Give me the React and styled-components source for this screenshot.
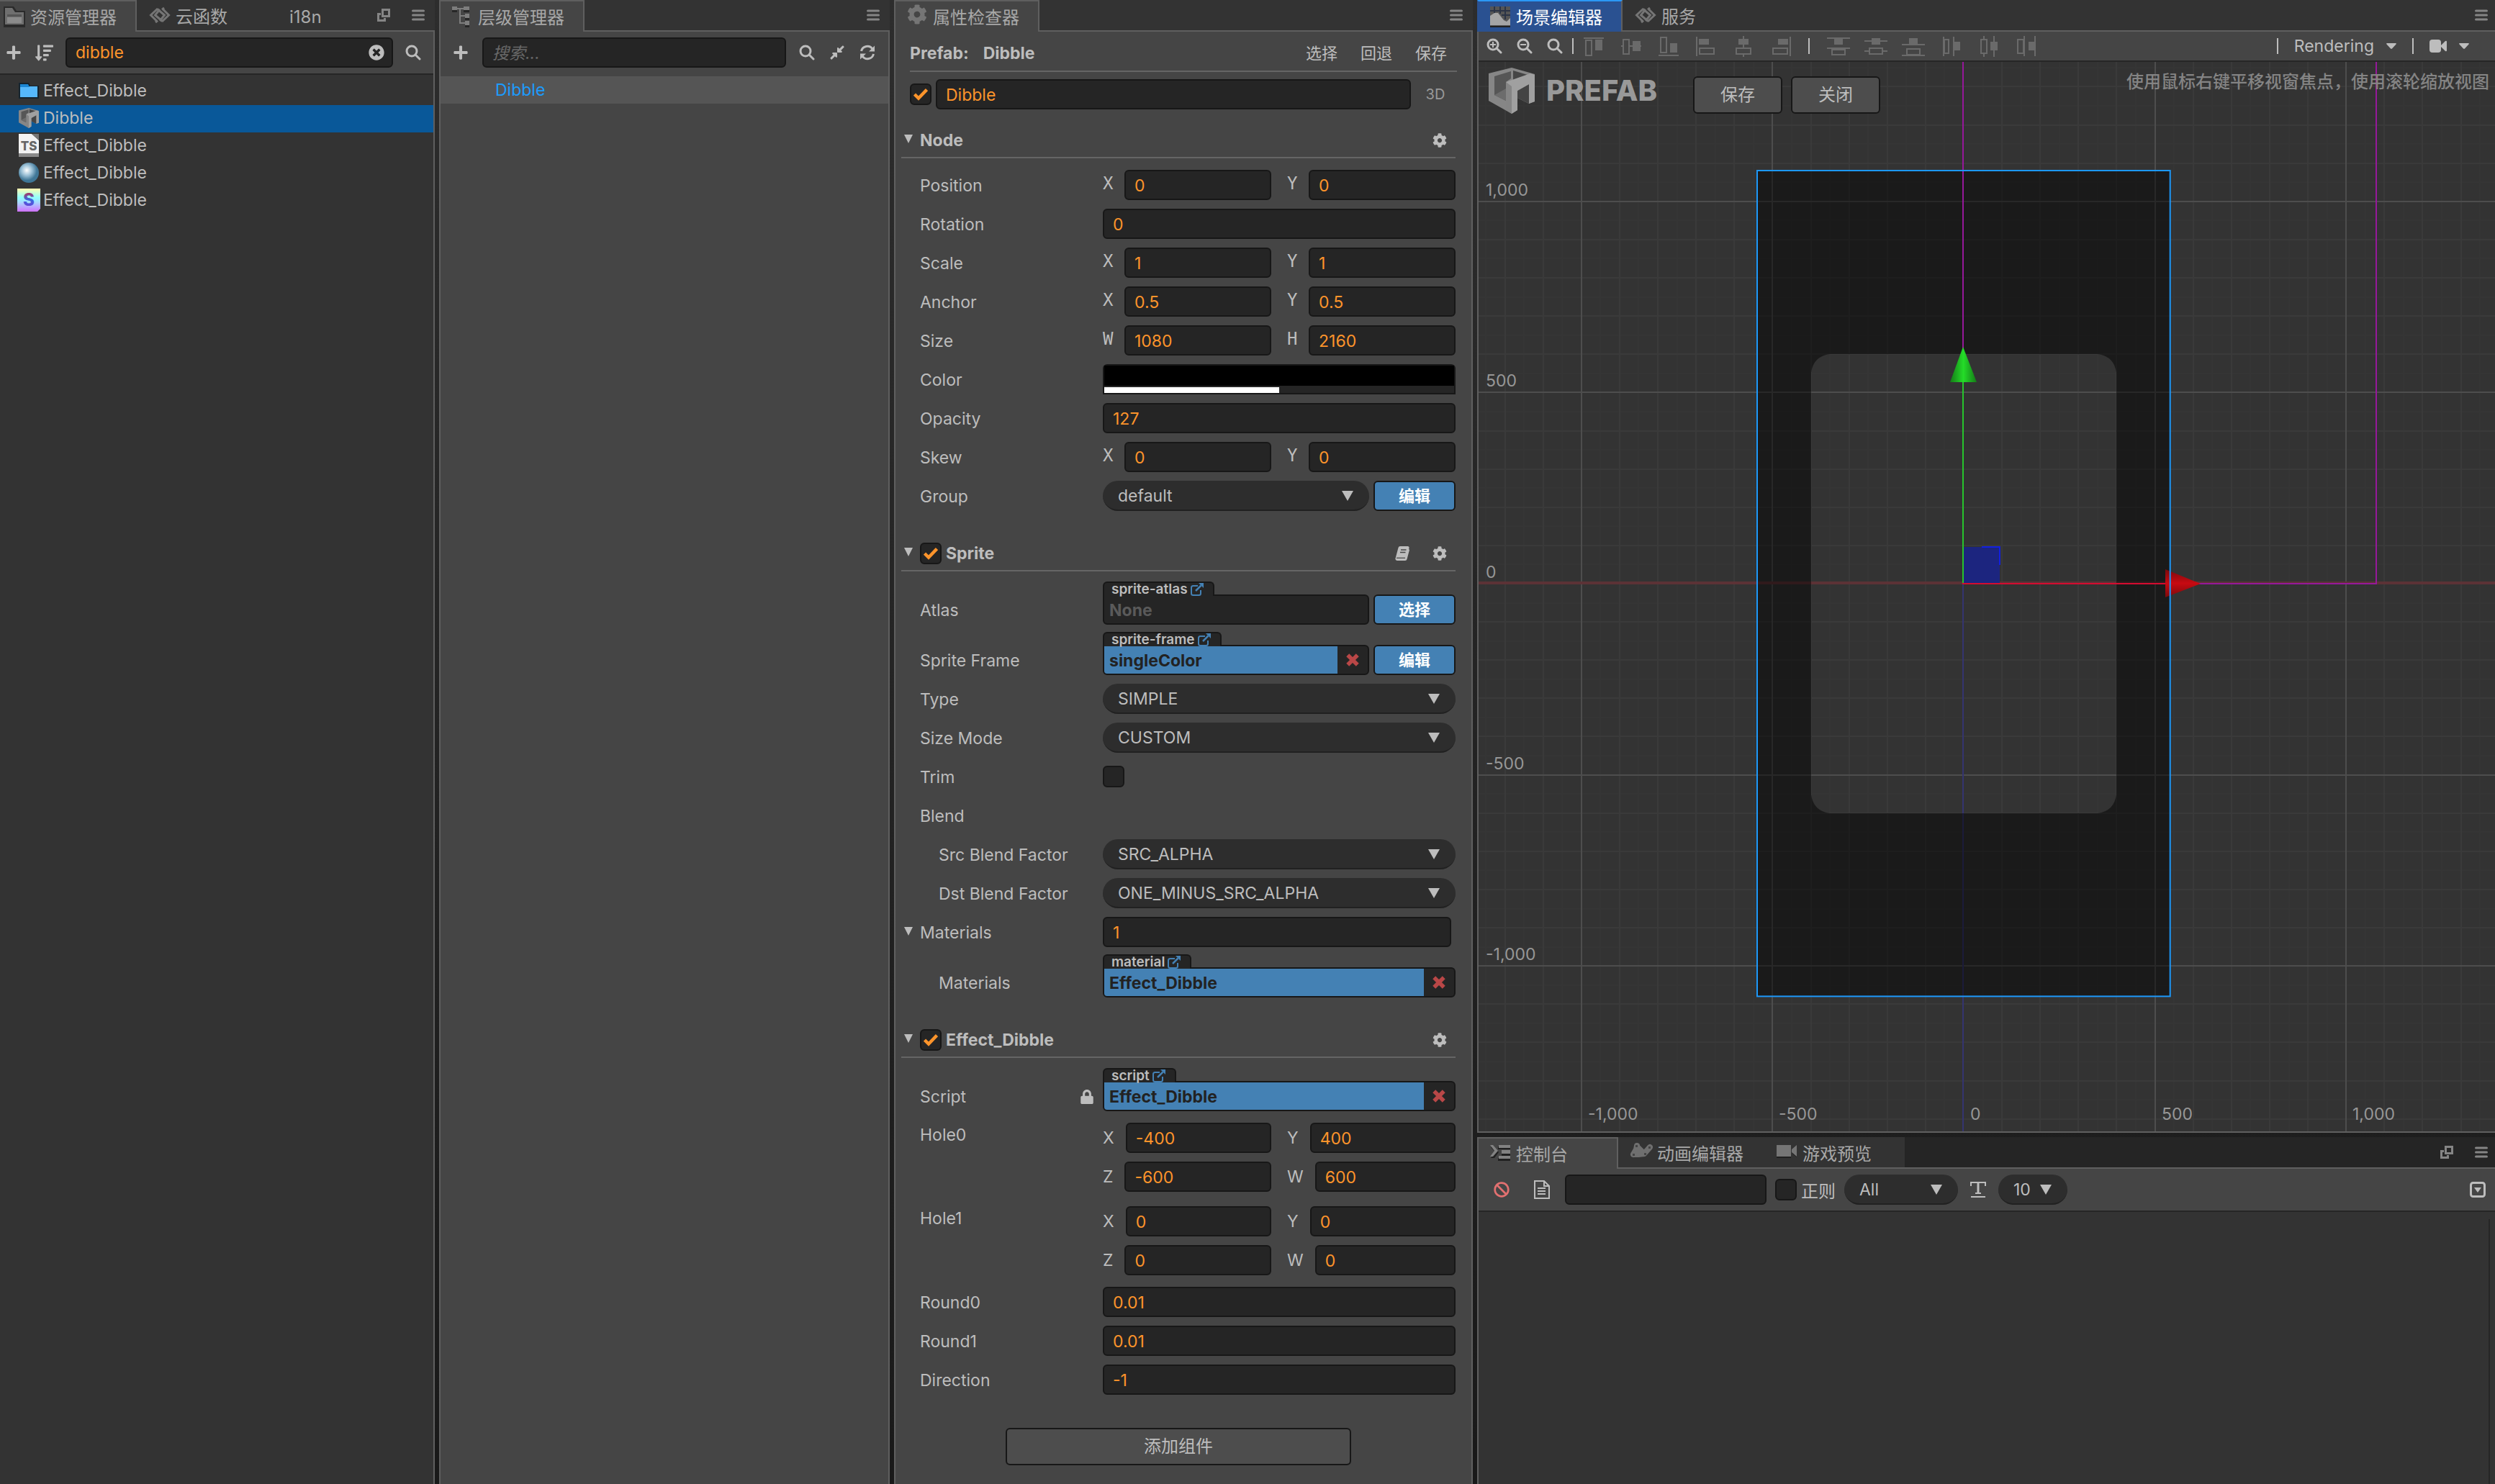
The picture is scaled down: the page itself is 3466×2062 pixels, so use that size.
import React from "react";
import styled, { createGlobalStyle, css } from "styled-components";
import { FaPlus, FaTimesCircle, FaCog, FaLock, FaBan, FaSortAmountDown, FaCompressAlt } from "react-icons/fa";

const GlobalStyle = createGlobalStyle`
  * { box-sizing: border-box; }
  body { margin: 0; background: #222; }
  body, input, button, select {
    font-family: Inter, "Noto Sans CJK SC", sans-serif;
    font-size: 23px;
    color: #bdbdbd;
  }
  button { margin: 0; padding: 0; border: 0; background: none; cursor: pointer; }
`;

/* ---------- shell ---------- */

const Editor = styled.div`
  display: grid;
  grid-template-columns: 604fr 626fr 804fr 1414fr;
  gap: 6px;
  height: 100vh;
  background: linear-gradient(#2d2d2d, #191919);
`;
const Stack = styled.div`
  display: grid;
  grid-template-rows: 1574fr 482fr;
  gap: 6px;
  min-width: 0;
`;
const Panel = styled.section`
  display: flex;
  flex-direction: column;
  min-width: 0;
  min-height: 0;
`;
const Body = styled.div`
  flex: 1;
  min-height: 0;
  display: flex;
  flex-direction: column;
  background: #454545;
  border: 2px solid #5f5f5f;
  border-top: 0;
  border-bottom-width: ${(p) => (p.$closed ? "2px" : "0")};
  ${(p) => p.$flushLeft && "border-left: 0;"}
  ${(p) => p.$flushRight && "border-right: 0;"}
`;
const TabBar = styled.div`
  flex: none;
  display: flex;
  height: 44px;
  background: #333;
`;
const Tab = styled.button`
  flex: 0 1 auto;
  min-width: ${(p) => (p.$flush || p.$plain ? "0" : "196px")};
  display: flex;
  align-items: center;
  gap: 6px;
  padding: 6px 28px 0 ${(p) => (p.$flush ? "4px" : "16px")};
  font-size: 24px;
  line-height: 34px;
  white-space: nowrap;
  color: #a8a8a8;
  background: #333;
  border-bottom: 2px solid #5f5f5f;
  ${(p) => p.$active && css`
    background: #454545;
    padding-top: 4px;
    padding-right: 26px;
    padding-left: ${p.$flush ? "4px" : "14px"};
    border: 2px solid #5f5f5f;
    border-left-width: ${p.$flush ? "0" : "2px"};
    border-bottom: 0;
  `}
  ${(p) => p.$focused && css`
    background: #2a5191;
    border-top-color: #2b98f5;
    border-left-color: #2a5191;
    color: #fff;
  `}
`;
const TabIcon = styled.svg`
  flex: none;
  width: 32px;
  height: 32px;
  margin-top: -6px;
  display: block;
`;
const TabTools = styled.div`
  flex: 1;
  display: flex;
  justify-content: flex-end;
  align-items: center;
  gap: 30px;
  padding-right: ${(p) => p.$right || 12}px;
  background: ${(p) => (p.$dark ? "#252525" : "#333")};
  border-bottom: 2px solid #5f5f5f;
`;
const Glyph = styled.svg`
  display: block;
  flex: none;
  width: ${(p) => p.$w || 20}px;
  height: ${(p) => p.$h || p.$w || 20}px;
`;
const IconButton = styled.button`
  flex: none;
  display: flex;
  align-items: center;
  justify-content: center;
  width: ${(p) => p.$w || 24}px;
  height: 42px;
  color: #bdbdbd;
`;
const Toolbar = styled.div`
  flex: none;
  display: flex;
  align-items: center;
  height: 58px;
  padding: ${(p) => p.$pad};
  gap: ${(p) => p.$gap || 16}px;
  border-bottom: ${(p) => (p.$line ? "2px solid #262626" : "0")};
  box-sizing: content-box;
`;

/* ---------- controls ---------- */

const fieldBox = css`
  height: 42px;
  background: #252525;
  border: 2px solid #171717;
  border-radius: 6px;
`;
const Field = styled.input`
  ${fieldBox}
  flex: ${(p) => p.$fixed ? `0 0 ${p.$fixed}px` : "1"};
  width: 100%;
  min-width: 0;
  padding: 2px 12px 0;
  color: #fd942b;
  outline: none;
  &::placeholder { color: #686868; font-style: italic; opacity: 1; }
`;
const SearchWrap = styled.label`
  ${fieldBox}
  flex: 1;
  min-width: 0;
  display: flex;
  align-items: center;
  padding-right: 10px;
  input { flex: 1; min-width: 0; border: 0; background: none; padding: 0 12px; color: #fd942b; outline: none; }
`;
const CheckWrap = styled.label`
  position: relative;
  flex: none;
  display: block;
  width: 30px;
  height: 30px;
  input {
    appearance: none;
    display: block;
    width: 30px;
    height: 30px;
    margin: 0;
    background: #252525;
    border: 2px solid #171717;
    border-radius: 6px;
  }
  svg { position: absolute; inset: 5px; display: none; color: #fd942b; }
  input:checked + svg { display: block; }
`;
const SelectWrap = styled.div`
  position: relative;
  flex: ${(p) => (p.$fixed ? `0 0 ${p.$fixed}px` : "1")};
  min-width: 0;
  select {
    appearance: none;
    display: block;
    width: 100%;
    height: 42px;
    padding: 2px 40px 0 21px;
    background: #2d2d2d;
    border: 0;
    border-bottom: 2px solid #212121;
    border-radius: 21px;
    outline: none;
  }
  svg { position: absolute; right: 22px; top: 14px; pointer-events: none; }
`;
const BlueButton = styled.button`
  flex: 0 0 114px;
  height: 42px;
  background: #4481b4;
  border: 2px solid #171717;
  border-radius: 6px;
  color: #fff;
  font-size: 22px;
  font-weight: 700;
  line-height: 34px;
`;
const GreyButton = styled.button`
  height: 52px;
  width: ${(p) => p.$w}px;
  background: #4d4d4d;
  border: 2px solid #171717;
  border-radius: 6px;
  font-size: 24px;
  line-height: 44px;
`;

/* ---------- assets & hierarchy ---------- */

const FileList = styled.ul`
  flex: 1;
  margin: 0;
  padding: 4px 0 0;
  list-style: none;
  background: ${(p) => (p.$dark ? "#333" : "#454545")};
  li { padding-bottom: ${(p) => (p.$dark ? 2 : 0)}px; }
`;
const FileRow = styled.li`
  display: flex;
  align-items: center;
  gap: ${(p) => p.$gap || 6}px;
  height: 38px;
  padding-left: ${(p) => p.$indent}px;
  color: ${(p) => p.$color || "#bdbdbd"};
  background: ${(p) => p.$bg || "transparent"};
`;

/* ---------- inspector ---------- */

const Inspector = styled.div`
  flex: 1;
  padding: 0 22px 0 8px;
`;
const PrefabRow = styled.div`
  display: flex;
  align-items: center;
  height: 56px;
  margin: 0 -2px 10px 12px;
  padding: 6px 14px 0 0;
  border-bottom: 2px solid #656565;
  font-size: 23px;
  b { margin-right: 20px; font-weight: 700; }
  b + b { flex: 1; }
  button { margin-left: 32px; font-size: 22px; line-height: 30px; }
`;
const NameRow = styled.div`
  display: flex;
  align-items: center;
  gap: 6px;
  padding-left: 12px;
`;
const Dim = styled.button`
  width: 56px;
  font-size: 20px;
  color: #999;
`;
const Group = styled.section`
  margin-top: 20px;
`;
const GroupHead = styled.header`
  display: flex;
  align-items: center;
  height: 48px;
  padding: 0 12px 0 4px;
  border-bottom: 2px solid #656565;
  h2 { flex: 1; margin: 0 0 0 ${(p) => (p.$check ? 6 : 0)}px; font-size: 23px; font-weight: 700; }
  button { margin-left: 32px; width: 20px; }
`;
const Fold = styled.span`
  flex: none;
  width: 22px;
  padding-bottom: 4px;
`;
const Rows = styled.div`
  padding: 10px 0;
`;
const Row = styled.div`
  display: flex;
  min-height: 54px;
  padding: ${(p) => (p.$asset ? "4px 0 6px" : p.$tall ? "4px 0" : "6px 0")} ;
  padding-right: ${(p) => p.$inset || 0}px;
`;
const Name = styled.span`
  flex: 0 0 ${(p) => (p.$fold ? 276 : p.$indent ? 228 : 254)}px;
  display: flex;
  align-items: center;
  justify-content: space-between;
  margin-left: ${(p) => (p.$fold ? 4 : p.$indent ? 52 : 26)}px;
  padding: ${(p) => (p.$asset ? "20px 12px 0 0" : "2px 12px 0 0")};
  height: ${(p) => (p.$asset ? "60px" : p.$tall ? "44px" : "42px")};
`;
const FoldName = styled.span`
  flex: 1;
  display: flex;
  align-items: center;
`;
const Value = styled.div`
  flex: 1;
  min-width: 0;
  display: flex;
  align-items: ${(p) => (p.$asset ? "flex-end" : "center")};
  gap: 6px;
`;
const Pairs = styled.div`
  flex: 1;
  min-width: 0;
  display: grid;
  grid-template-columns: 1fr 1fr;
  gap: 12px 22px;
  padding: ${(p) => (p.$tall ? "6px 0" : "0")};
`;
const Axis = styled.label`
  display: flex;
  align-items: center;
  min-width: 0;
  span {
    flex: none;
    min-width: 30px;
    padding-right: 16px;
    ${(p) => p.$mono && css`
      font-family: "DejaVu Sans Mono", monospace;
      font-size: 24px;
      padding: 0 0 4px;
    `}
  }
`;
const ColorBox = styled.button`
  flex: 1;
  height: 42px;
  display: flex;
  flex-direction: column;
  background: #252525;
  border: 2px solid #171717;
  border-radius: 6px 6px 0 0;
  i { align-self: stretch; flex: 1; background: #000; }
  b { align-self: flex-start; width: 50%; height: 8px; margin-top: 2px; background: #fff; }
`;
const Asset = styled.div`
  flex: 1;
  min-width: 0;
  display: flex;
  flex-direction: column;
  align-items: stretch;
`;
const AssetTag = styled.a`
  position: relative;
  align-self: flex-start;
  display: flex;
  align-items: center;
  gap: 4px;
  height: 20px;
  margin-bottom: -2px;
  padding: 0 13px 0 10px;
  background: #252525;
  border: 2px solid #171717;
  border-bottom: 0;
  border-radius: 6px 6px 0 0;
  color: #bdbdbd;
  font-size: 19px;
  font-weight: 600;
  line-height: 18px;
  text-decoration: none;
`;
const AssetBox = styled.div`
  ${fieldBox}
  border-top-left-radius: 0;
  display: flex;
  align-items: stretch;
  overflow: hidden;
  font-weight: 700;
  line-height: 40px;
  span { flex: 1; padding-left: 7px; color: ${(p) => (p.$empty ? "#5a5a5a" : "#222")}; background: ${(p) => (p.$empty ? "none" : "#4481b4")}; }
  button { width: 42px; display: flex; align-items: center; justify-content: center; color: #b94747; }
`;
const AddRow = styled.div`
  display: flex;
  justify-content: center;
  padding-top: 30px;
`;

/* ---------- scene ---------- */

const Divider = styled.span`
  flex: none;
  width: 2px;
  height: 22px;
  background: #bdbdbd;
`;
const SceneTools = styled.div`
  flex: none;
  display: flex;
  align-items: center;
  height: 42px;
  padding: 0 14px 0 8px;
  border-bottom: 2px solid #262626;
`;
const ToolRun = styled.div`
  display: flex;
  align-items: center;
  gap: ${(p) => p.$gap}px;
  padding: 0 ${(p) => p.$r}px 0 ${(p) => p.$l}px;
`;
const Spacer = styled.span`
  flex: 1;
`;
const MenuButton = styled.button`
  display: flex;
  align-items: center;
  gap: 17px;
  padding: 0 22px;
`;
const Viewport = styled.div`
  position: relative;
  flex: 1;
  min-height: 0;
  background: #333;
  overflow: hidden;
`;
const SceneSvg = styled.svg`
  position: absolute;
  inset: 0;
  width: 100%;
  height: 100%;
  text { font-size: 23px; fill: #979797; }
`;
const Overlay = styled.div`
  position: absolute;
  inset: 0 8px auto 14px;
  display: flex;
  align-items: flex-start;
  padding-top: 8px;
  gap: 12px;
`;
const Brand = styled.div`
  display: flex;
  align-items: center;
  gap: 16px;
  width: 272px;
  height: 64px;
  font-size: 40px;
  font-weight: 800;
  line-height: 60px;
  color: #999;
`;
const Hint = styled.p`
  flex: 1;
  margin: 0;
  text-align: right;
  font-size: 24px;
  font-weight: 500;
  line-height: 40px;
  white-space: nowrap;
  color: #848484;
`;
const OverlayButtons = styled.div`
  display: flex;
  gap: 12px;
  padding-top: 12px;
`;

/* ---------- console ---------- */

const CheckText = styled.label`
  display: flex;
  align-items: center;
  gap: 6px;
  margin: 0 -4px;
  font-size: 24px;
`;
const Log = styled.div`
  flex: 1;
  padding: 10px 7px 0 0;
  background: #333;
  display: flex;
  justify-content: flex-end;
`;
const LogTrack = styled.span`
  width: 2px;
  background: #262626;
`;

/* ---------- drawings ---------- */

const Burger = () => (
  <Glyph $w={18} viewBox="0 0 18 18" stroke="#858585" strokeWidth="3" strokeLinecap="round">
    <path d="M1.5 3h15M1.5 9h15M1.5 15h15" />
  </Glyph>
);
const PopOut = () => (
  <Glyph $w={18} viewBox="0 0 18 18" fill="none" stroke="#858585" strokeWidth="3">
    <path d="M7.5 1.5h9v9h-9z" /><path d="M5 7.5H1.500v9h9V13" />
  </Glyph>
);
const Search = ({ mark }) => (
  <Glyph $w={22} viewBox="0 0 22 22" fill="none" stroke="#bdbdbd" strokeWidth="3" strokeLinecap="round">
    <circle cx="9" cy="9" r="7" /><path d="M14.500 14.500L20 20" />
    {mark && <path strokeWidth="2" strokeLinecap="butt" d={mark === "+" ? "M5 9h8M9 5v8" : "M5 9h8"} />}
  </Glyph>
);
const Refresh = () => (
  <Glyph $w={22} viewBox="0 0 22 22" fill="none" stroke="#bdbdbd" strokeWidth="3">
    <path d="M2.500 9a8.600 8.600 0 0 1 15.500-3M19.500 13a8.600 8.600 0 0 1-15.500 3" />
    <path d="M21 1.500v8h-8zM1 20.500v-8h8z" fill="#bdbdbd" stroke="none" />
  </Glyph>
);
const Book = () => (
  <Glyph $w={20} viewBox="0 0 20 20">
    <path d="M7 0h11q2 .5 1.500 2.500L16 17q-.5 1.500-2 1.500H3.500v-.8h10q1 0 1.300-1L18.600 3.500 20 5l-3.500 13q-.5 2-2.500 2H3Q0 19.500.5 17L4.500 2Q5 0 7 0z" fill="#bdbdbd" />
    <path d="M8 5h7.500M7 8.500h7.500" stroke="#454545" strokeWidth="1.500" />
    <path d="M2 16.300h12" stroke="#454545" strokeWidth="1.200" />
  </Glyph>
);
const Tri = ({ w = 16, h = 14 }) => (
  <Glyph $w={w} $h={h} viewBox="0 0 16 14" preserveAspectRatio="none"><path d="M0 0h16L8 14z" fill="#bdbdbd" /></Glyph>
);
const Caret = () => (
  <Glyph $w={14} $h={8} viewBox="0 0 14 8"><path d="M1 0h12q1.500.5.5 1.500L8 7.500q-1 .8-2 0L.5 1.500Q-.5.5 1 0z" fill="#bdbdbd" /></Glyph>
);
const Cross = () => (
  <Glyph $w={18} viewBox="0 0 16 16" stroke="#b94747" strokeWidth="5"><path d="M2 2l12 12M14 2L2 14" /></Glyph>
);
const Tick = () => (
  <Glyph $w={20} viewBox="0 0 20 20" fill="none" stroke="#fd942b" strokeWidth="4.500">
    <path d="M1.500 10l5.500 5.500L18.500 3.500" />
  </Glyph>
);
const External = () => (
  <Glyph $w={18} viewBox="0 0 18 18" fill="none" stroke="#4481b4" strokeWidth="2">
    <path d="M10 4H3.500Q1 4 1 6.500v8Q1 17 3.500 17h8q2.500 0 2.500-2.500V10" />
    <path d="M7 11l7.500-7.500" strokeWidth="2.500" /><path d="M11 0h7v7z" fill="#4481b4" stroke="none" />
  </Glyph>
);
const Swirl = () => (
  <TabIcon viewBox="0 0 32 32" fill="none" stroke="#757575" strokeWidth="3">
    <path d="M13 7L3.500 16l8 8M10 26l3-2.500M16 8l-6.500 8 10 8.500M19 25l9.500-9-8-8M22 6l-3 2.500M16 24l6.500-8-10-8.500" />
  </TabIcon>
);
const FolderTab = () => (
  <TabIcon viewBox="0 0 32 32">
    <path d="M1 3h14l4 6h12v23H1z" fill="#2b2b2b" />
    <path d="M3 5h10l4 6h12v17H3z" fill="#6f6f6f" /><path d="M6 14h20v3H6z" fill="#555" /><path d="M6 18h20v8H6z" fill="#8b8b8b" />
  </TabIcon>
);
const TreeTab = () => (
  <TabIcon viewBox="0 0 32 32">
    <path d="M2 6h7v5H2zM18 6h8v5h-8zM20 16h6v6h-6zM20 26h6v7h-6z" fill="#262626" />
    <path d="M2 3h7v5H2zM18 3h8v5h-8zM20 13h6v6h-6zM20 23h6v6h-6zM9 5h9v2H9zM12 5h2v22h-2zM14 15h6v2h-6zM14 25h6v2h-6z" fill="#7d7d7d" />
  </TabIcon>
);
const SceneTab = () => (
  <TabIcon viewBox="0 0 32 32">
    <path d="M2 3h28v30H2z" fill="#555" /><path d="M8 3v10M16 3v10M23 3v18M2 9h28M18 15h12" stroke="#2b3446" strokeWidth="2" />
    <path d="M2 16l6-4h5l8 10 4 2 5-5v10H2z" fill="#a5a5a5" /><path d="M2 30h28v2H2z" fill="#222" />
  </TabIcon>
);
const ConsoleTab = () => (
  <TabIcon viewBox="0 0 32 32">
    <path d="M3 8h5l6 7-6 8H3l6-8zM13 7h17v4H13zM18 16h12v4H18zM13 23h17v4H13z" fill="#202020" />
    <path d="M2 5h4l7 8-7 8H2l6-8zM14 5h16v4H14zM18 12h12v5H18zM14 20h16v4H14z" fill="#828282" />
  </TabIcon>
);
const AnimTab = () => (
  <TabIcon viewBox="0 0 32 32">
    <path d="M5 19l4-7 1-5M5 19h7l8-1 8-9M10 8l10 10" stroke="#6f6f6f" strokeWidth="8" strokeLinecap="round" strokeLinejoin="round" fill="none" />
    <path d="M8 6h3v3H8zM4 18h3v3H4zM20 17h3v3h-3zM26 8h3v3h-3z" fill="#444" />
  </TabIcon>
);
const CameraTab = () => (
  <TabIcon viewBox="0 0 32 32">
    <path d="M2 9h20v15H2zM24 14l6-5v14l-6-5z" fill="#202020" /><path d="M2 6h20v16H2zM23 12l7-6v16l-7-6z" fill="#757575" />
  </TabIcon>
);
const Cube = ({ size }) => (
  <Glyph $w={size} viewBox="0 0 64 64">
    <path d="M32 0l32 9v38l-8 3-16-8v17l-8 5L0 46V8z" fill="#868686" />
    <path d="M8 12l23-7v10l-7 5v26L8 38z" fill="#565656" /><path d="M34 4l20 6-20 8z" fill="#454545" />
    <path d="M40 32l16-9v27l-16-8z" fill="#444" /><path d="M8 38l16-9v17z" fill="#6c6c6c" />
    <path d="M24 20L58 8l6 2v37l-8 3V23l-16 9v27l-8 5V27z" fill="#a0a0a0" />
    <path d="M24 20l8 6v38l-8-5z" fill="#858585" />
  </Glyph>
);

/* Each glyph: filled bars, one solid block and one outlined block. */
const ALIGN = [
  [[[2, 4, 28, 2]], [18, 7, 10, 15], [5, 8, 8, 21]],
  [[[2, 15, 28, 2]], [18, 9, 11, 14], [5, 7, 8, 20]],
  [[[2, 28, 28, 2]], [18, 12, 10, 13], [5, 4, 8, 21]],
  [[[2, 3, 2, 27]], [6, 6, 14, 8], [7, 19, 20, 8]],
  [[[15, 2, 2, 29]], [9, 6, 14, 8], [6, 19, 20, 8]],
  [[[28, 3, 2, 27]], [12, 6, 14, 8], [5, 19, 20, 8]],
  [[[0, 4, 32, 2], [0, 18, 32, 2]], [10, 6, 12, 8], [7, 21, 18, 7]],
  [[[0, 8, 32, 2], [0, 22, 32, 2]], [10, 5, 12, 9], [7, 19, 18, 8]],
  [[[0, 13, 32, 2], [0, 28, 32, 2]], [10, 5, 12, 8], [7, 20, 18, 8]],
  [[[5, 3, 2, 27], [19, 3, 2, 27]], [21, 10, 8, 12], [7, 7, 6, 19]],
  [[[9, 2, 2, 29], [23, 2, 2, 29]], [19, 10, 10, 12], [6, 7, 8, 19]],
  [[[13, 2, 2, 28], [28, 2, 2, 28]], [20, 10, 8, 12], [5, 7, 8, 19]],
];
const AlignIcon = ({ n }) => {
  const [bars, s, o] = ALIGN[n];
  return (
    <Glyph $w={32} viewBox="0 0 32 32" fill="#6a6a6a">
      {bars.map((b, i) => <rect key={i} x={b[0]} y={b[1]} width={b[2]} height={b[3]} />)}
      <rect x={s[0]} y={s[1]} width={s[2]} height={s[3]} />
      <rect x={o[0]} y={o[1]} width={o[2]} height={o[3]} fill="#454545" stroke="#6a6a6a" strokeWidth="2" />
    </Glyph>
  );
};

/* ---------- small composites ---------- */

const Check = ({ label, checked }) => (
  <CheckWrap><input type="checkbox" aria-label={label} defaultChecked={checked} /><Tick /></CheckWrap>
);
const Select = ({ label, value, fixed }) => (
  <SelectWrap $fixed={fixed}>
    <select aria-label={label} defaultValue={value}><option>{value}</option></select>
    <Tri />
  </SelectWrap>
);
const TextRow = ({ name, value, fold, inset }) => (
  <Row $inset={inset}>
    <Name $fold={fold}>{fold ? <FoldName><Fold><Tri w={12} h={12} /></Fold>{name}</FoldName> : name}</Name>
    <Value><Field aria-label={name} defaultValue={value} /></Value>
  </Row>
);
const PairRow = ({ name, axes, values, tall }) => (
  <Row $tall={tall}>
    <Name $tall={tall}>{name}</Name>
    <Pairs $tall={tall}>
      {axes.split("").map((a, i) => (
        <Axis key={a} $mono={!tall}><span>{a}</span><Field aria-label={`${name} ${a}`} defaultValue={values[i]} /></Axis>
      ))}
    </Pairs>
  </Row>
);
const SelectRow = ({ name, value, indent }) => (
  <Row><Name $indent={indent}>{name}</Name><Value><Select label={name} value={value} /></Value></Row>
);
const AssetRow = ({ name, type, value, action, indent, locked }) => (
  <Row $asset>
    <Name $asset $indent={indent}>{name}{locked && <FaLock size={20} />}</Name>
    <Value $asset>
      <Asset>
        <AssetTag href="#">{type}<External /></AssetTag>
        <AssetBox $empty={!value}>
          <span>{value || "None"}</span>
          {value && <button aria-label={`Clear ${name}`}><Cross /></button>}
        </AssetBox>
      </Asset>
      {action && <BlueButton>{action}</BlueButton>}
    </Value>
  </Row>
);
const Section = ({ title, check, help, children }) => (
  <Group>
    <GroupHead $check={check}>
      <Fold><Tri w={12} h={12} /></Fold>
      {check && <Check label={title} checked />}
      <h2>{title}</h2>
      {help && <IconButton aria-label="Help"><Book /></IconButton>}
      <IconButton aria-label="Settings"><FaCog size={20} /></IconButton>
    </GroupHead>
    <Rows>{children}</Rows>
  </Group>
);

/* ---------- scene drawing ---------- */

const UNIT = 0.5312;
const OX = 674;
const OY = 725;
const CX = OX - 1;
const sx = (v) => Math.round(OX + v * UNIT);
const sy = (v) => Math.round(OY - v * UNIT);
const steps = Array.from({ length: 61 }, (_, i) => (i - 30) * 50);
const shade = (v) => (v % 500 === 0 ? "#4d4d4d" : v % 100 === 0 ? "#3a3a3a" : "#353535");
const fmt = (v) => v.toLocaleString("en-US");

const Scene = () => (
  <SceneSvg>
    <defs>
      <linearGradient id="up"><stop offset="0" stopColor="#157a18" /><stop offset=".5" stopColor="#24dc28" /><stop offset="1" stopColor="#157a18" /></linearGradient>
      <linearGradient id="right" x2="0" y2="1"><stop offset="0" stopColor="#7a0a0c" /><stop offset=".5" stopColor="#c80a12" /><stop offset="1" stopColor="#7a0a0c" /></linearGradient>
    </defs>
    {[50, 100, 500].map((level) => (
      <g key={level}>
        {steps.filter((v) => v !== 0 && v % level === 0).map((v) => (
          <g key={v} fill={shade(v)}>
            <rect x={sx(v) - 1} y="0" width="2" height="100%" />
            <rect x="0" y={sy(v) - 1} width="100%" height="2" />
          </g>
        ))}
      </g>
    ))}
    <rect x={CX - 1} y="0" width="2" height="100%" fill="#343470" />
    <rect x="0" y={OY - 3} width="100%" height="4" fill="#5c3236" />
    <path
      fillRule="evenodd" fill="#000" fillOpacity=".48"
      d={`M${sx(-540)} ${sy(1080)}H${sx(540)}V${sy(-1080)}H${sx(-540)}z M${sx(-400) + 26} ${sy(600)}H${sx(400) - 26}Q${sx(400) - 3} ${sy(600) + 3} ${sx(400)} ${sy(600) + 26}V${sy(-600) - 26}Q${sx(400) - 3} ${sy(-600) - 3} ${sx(400) - 26} ${sy(-600)}H${sx(-400) + 26}Q${sx(-400) + 3} ${sy(-600) - 3} ${sx(-400)} ${sy(-600) - 26}V${sy(600) + 26}Q${sx(-400) + 3} ${sy(600) + 3} ${sx(-400) + 26} ${sy(600)}z`}
    />
    <path d={`M${CX} 0V${OY}H${sx(1080) - 1}V0`} fill="none" stroke="#96189a" strokeWidth="2" />
    <rect x={OX} y={OY - 51} width="50" height="50" fill="#1c257f" />
    <path d={`M${OX + 25} ${OY - 51}H${OX + 50}V${OY - 26}`} fill="none" stroke="#1220e0" strokeWidth="2" />
    <rect x={CX - 1} y={OY - 282} width="2" height="282" fill="#27c42c" />
    <path d={`M${CX - 18} ${OY - 280}L${CX} ${OY - 329}L${CX + 19} ${OY - 280}z`} fill="url(#up)" />
    <rect x={CX - 1} y={OY - 1} width="284" height="2" fill="#d40c30" />
    <path d={`M${OX + 280} ${OY - 20}L${OX + 329} ${OY}L${OX + 280} ${OY + 19}z`} fill="url(#right)" />
    <rect x={sx(-540)} y={sy(1080)} width={1080 * UNIT} height={2160 * UNIT} fill="none" stroke="#1c98fa" strokeWidth="2" />
    {[1000, 500, 0, -500, -1000].map((v) => <text key={`y${v}`} x="10" y={sy(v) - 8}>{fmt(v)}</text>)}
    {[-1000, -500, 0, 500, 1000].map((v) => <text key={`x${v}`} x={sx(v) + 9} y="1470">{fmt(v)}</text>)}
  </SceneSvg>
);

/* ---------- file icons ---------- */

const FolderIcon = () => (
  <Glyph $w={28} viewBox="0 0 28 28"><path d="M0 3h14l2 4h12v18H0z" fill="#14242f" /><path d="M2 8h24v15H2z" fill="#56b8fb" /><path d="M2 5h11l2 4H2z" fill="#1b86d3" /></Glyph>
);
const TsIcon = () => (
  <Glyph $w={28} $h={32} viewBox="0 0 28 32"><path d="M0 0h18l10 9v23H0z" fill="#f2f2f2" /><path d="M18 0h10v9z" fill="#777" /><path d="M0 27h28v5H0z" fill="#8a8a8a" /><text x="14" y="23" textAnchor="middle" fontSize="17" fontWeight="800" fill="#666">TS</text></Glyph>
);
const BallIcon = () => (
  <Glyph $w={28} viewBox="0 0 28 28"><defs><radialGradient id="ball" cx=".4" cy=".38"><stop offset="0" stopColor="#fff" /><stop offset=".5" stopColor="#9fc3d8" /><stop offset="1" stopColor="#3f7696" /></radialGradient></defs><circle cx="14" cy="14" r="14" fill="url(#ball)" /></Glyph>
);
const ShaderIcon = () => (
  <Glyph $w={32} viewBox="0 0 32 32"><defs><linearGradient id="shade" x2="0" y2="1"><stop offset="0" stopColor="#ffffb0" /><stop offset=".4" stopColor="#90ffff" /><stop offset=".6" stopColor="#a8d8ff" /><stop offset="1" stopColor="#d070ff" /></linearGradient><linearGradient id="ess" x2="0" y2="1"><stop offset="0" stopColor="#e02020" /><stop offset=".5" stopColor="#3a6ae0" /><stop offset="1" stopColor="#8030d0" /></linearGradient></defs><path d="M0 0h32v28l-4 4H0z" fill="url(#shade)" /><text x="16" y="24" textAnchor="middle" fontSize="24" fontWeight="800" fill="url(#ess)">S</text></Glyph>
);

const FILES = [
  { icon: <FolderIcon />, name: "Effect_Dibble" },
  { icon: <Cube size={28} />, name: "Dibble", selected: true },
  { icon: <TsIcon />, name: "Effect_Dibble" },
  { icon: <BallIcon />, name: "Effect_Dibble" },
  { icon: <ShaderIcon />, name: "Effect_Dibble", wide: true },
];

/* ---------- panels ---------- */

const AssetsPanel = () => (
  <Panel>
    <TabBar>
      <Tab $active $flush><FolderTab />资源管理器</Tab>
      <Tab><Swirl />云函数</Tab>
      <Tab $plain>i18n</Tab>
      <TabTools $right={14}><PopOut /><Burger /></TabTools>
    </TabBar>
    <Body $flushLeft>
      <Toolbar $line $pad="0 16px 0 7px">
        <IconButton aria-label="New asset"><FaPlus size={22} /></IconButton>
        <IconButton $w={28} aria-label="Sort"><FaSortAmountDown size={25} /></IconButton>
        <SearchWrap>
          <input aria-label="Search assets" defaultValue="dibble" />
          <FaTimesCircle size={22} />
        </SearchWrap>
        <IconButton aria-label="Search"><Search /></IconButton>
      </Toolbar>
      <FileList $dark>
        {FILES.map((f, i) => (
          <FileRow key={i} $indent={f.wide ? 24 : 26} $gap={f.wide ? 4 : 6} $bg={f.selected ? "#095899" : undefined}>{f.icon}{f.name}</FileRow>
        ))}
      </FileList>
    </Body>
  </Panel>
);

const HierarchyPanel = () => (
  <Panel>
    <TabBar>
      <Tab $active><TreeTab />层级管理器</Tab>
      <TabTools $right={14}><Burger /></TabTools>
    </TabBar>
    <Body>
      <Toolbar $pad="0 18px 0 16px" $gap={18}>
        <IconButton aria-label="New node"><FaPlus size={22} /></IconButton>
        <Field aria-label="Search nodes" placeholder="搜索..." />
        <IconButton $w={22} aria-label="Search"><Search /></IconButton>
        <IconButton $w={26} aria-label="Collapse"><FaCompressAlt size={22} /></IconButton>
        <IconButton $w={22} aria-label="Refresh"><Refresh /></IconButton>
      </Toolbar>
      <FileList><FileRow $indent={76} $bg="#555" $color="#1c9cff">Dibble</FileRow></FileList>
    </Body>
  </Panel>
);

const InspectorPanel = () => (
  <Panel>
    <TabBar>
      <Tab $active><TabIcon as="span"><FaCog size={28} color="#757575" /></TabIcon>属性检查器</Tab>
      <TabTools $right={14}><Burger /></TabTools>
    </TabBar>
    <Body>
      <Inspector>
        <PrefabRow>
          <b>Prefab:</b><b>Dibble</b>
          <button>选择</button><button>回退</button><button>保存</button>
        </PrefabRow>
        <NameRow>
          <Check label="Active" checked />
          <Field aria-label="Node name" defaultValue="Dibble" />
          <Dim>3D</Dim>
        </NameRow>
        <Section title="Node">
          <PairRow name="Position" axes="XY" values={["0", "0"]} />
          <TextRow name="Rotation" value="0" />
          <PairRow name="Scale" axes="XY" values={["1", "1"]} />
          <PairRow name="Anchor" axes="XY" values={["0.5", "0.5"]} />
          <PairRow name="Size" axes="WH" values={["1080", "2160"]} />
          <Row><Name>Color</Name><Value><ColorBox aria-label="Color"><i /><b /></ColorBox></Value></Row>
          <TextRow name="Opacity" value="127" />
          <PairRow name="Skew" axes="XY" values={["0", "0"]} />
          <Row><Name>Group</Name><Value><Select label="Group" value="default" /><BlueButton>编辑</BlueButton></Value></Row>
        </Section>
        <Section title="Sprite" check help>
          <AssetRow name="Atlas" type="sprite-atlas" action="选择" />
          <AssetRow name="Sprite Frame" type="sprite-frame" value="singleColor" action="编辑" />
          <SelectRow name="Type" value="SIMPLE" />
          <SelectRow name="Size Mode" value="CUSTOM" />
          <Row><Name>Trim</Name><Value><Check label="Trim" /></Value></Row>
          <Row><Name>Blend</Name></Row>
          <SelectRow name="Src Blend Factor" value="SRC_ALPHA" indent />
          <SelectRow name="Dst Blend Factor" value="ONE_MINUS_SRC_ALPHA" indent />
          <TextRow name="Materials" value="1" fold inset={6} />
          <AssetRow name="Materials" type="material" value="Effect_Dibble" indent />
        </Section>
        <Section title="Effect_Dibble" check>
          <AssetRow name="Script" type="script" value="Effect_Dibble" locked />
          <PairRow name="Hole0" axes="XYZW" values={["-400", "400", "-600", "600"]} tall />
          <PairRow name="Hole1" axes="XYZW" values={["0", "0", "0", "0"]} tall />
          <TextRow name="Round0" value="0.01" />
          <TextRow name="Round1" value="0.01" />
          <TextRow name="Direction" value="-1" />
        </Section>
        <AddRow><GreyButton $w={480}>添加组件</GreyButton></AddRow>
      </Inspector>
    </Body>
  </Panel>
);

const ScenePanel = () => (
  <Panel>
    <TabBar>
      <Tab $active $focused><SceneTab />场景编辑器</Tab>
      <Tab><Swirl />服务</Tab>
      <TabTools $right={10}><Burger /></TabTools>
    </TabBar>
    <Body $closed $flushRight>
      <SceneTools>
        <ToolRun $gap={18} $l={2} $r={12}>
          <IconButton aria-label="Zoom in"><Search mark="+" /></IconButton>
          <IconButton aria-label="Zoom out"><Search mark="-" /></IconButton>
          <IconButton aria-label="Reset zoom"><Search /></IconButton>
        </ToolRun>
        <Divider />
        <ToolRun $gap={20} $l={12} $r={22}>
          {[0, 1, 2, 3, 4, 5].map((n) => <IconButton key={n} $w={32} aria-label="Align"><AlignIcon n={n} /></IconButton>)}
        </ToolRun>
        <Divider />
        <ToolRun $gap={20} $l={24} $r={0}>
          {[6, 7, 8, 9, 10, 11].map((n) => <IconButton key={n} $w={32} aria-label="Distribute"><AlignIcon n={n} /></IconButton>)}
        </ToolRun>
        <Spacer />
        <Divider />
        <MenuButton>Rendering<Caret /></MenuButton>
        <Divider />
        <MenuButton aria-label="Camera">
          <Glyph $w={24} $h={18} viewBox="0 0 24 18" fill="#bdbdbd"><rect width="16" height="18" rx="4" /><path d="M16 8l6-6q2-1 2 1v12q0 2-2 1l-6-6z" /></Glyph>
          <Caret />
        </MenuButton>
      </SceneTools>
      <Viewport>
        <Scene />
        <Overlay>
          <Brand><Cube size={64} />PREFAB</Brand>
          <OverlayButtons><GreyButton $w={124}>保存</GreyButton><GreyButton $w={124}>关闭</GreyButton></OverlayButtons>
          <Hint>使用鼠标右键平移视窗焦点，使用滚轮缩放视图</Hint>
        </Overlay>
      </Viewport>
    </Body>
  </Panel>
);

const ConsolePanel = () => (
  <Panel>
    <TabBar>
      <Tab $active><ConsoleTab />控制台</Tab>
      <Tab><AnimTab />动画编辑器</Tab>
      <Tab><CameraTab />游戏预览</Tab>
      <TabTools $dark $right={10}><PopOut /><Burger /></TabTools>
    </TabBar>
    <Body $flushRight>
      <Toolbar $line $pad="0 12px 0 20px">
        <ToolRun $gap={32} $l={0} $r={4}>
          <IconButton aria-label="Clear"><FaBan size={22} color="#e27070" /></IconButton>
          <IconButton aria-label="Open log">
            <Glyph $w={22} $h={26} viewBox="0 0 22 26" fill="none" stroke="#bdbdbd" strokeWidth="2"><path d="M1 1h13l7 7v17H1zM14 1v7h7M5 11h11M5 15h11M5 19h11" /></Glyph>
          </IconButton>
        </ToolRun>
        <Field $fixed={280} aria-label="Filter" />
        <CheckText><Check label="正则" />正则</CheckText>
        <Select label="Level" value="All" fixed={158} />
        <IconButton as="span">
          <Glyph $w={22} $h={24} viewBox="0 0 22 24" fill="none" stroke="#bdbdbd" strokeWidth="2"><path d="M1 7V2h20v5M7 17h8M1 22h20" /><path d="M11 2v15" strokeWidth="3" /></Glyph>
        </IconButton>
        <Select label="Font size" value="10" fixed={96} />
        <Spacer />
        <IconButton aria-label="Collapse">
          <Glyph $w={22} viewBox="0 0 22 22"><rect x="1.500" y="1.500" width="19" height="19" rx="3" fill="none" stroke="#bdbdbd" strokeWidth="3" /><path d="M6 8h10l-5 7z" fill="#bdbdbd" /></Glyph>
        </IconButton>
      </Toolbar>
      <Log><LogTrack /></Log>
    </Body>
  </Panel>
);

export default function App() {
  return (
    <>
      <GlobalStyle />
      <Editor>
        <AssetsPanel />
        <HierarchyPanel />
        <InspectorPanel />
        <Stack>
          <ScenePanel />
          <ConsolePanel />
        </Stack>
      </Editor>
    </>
  );
}
